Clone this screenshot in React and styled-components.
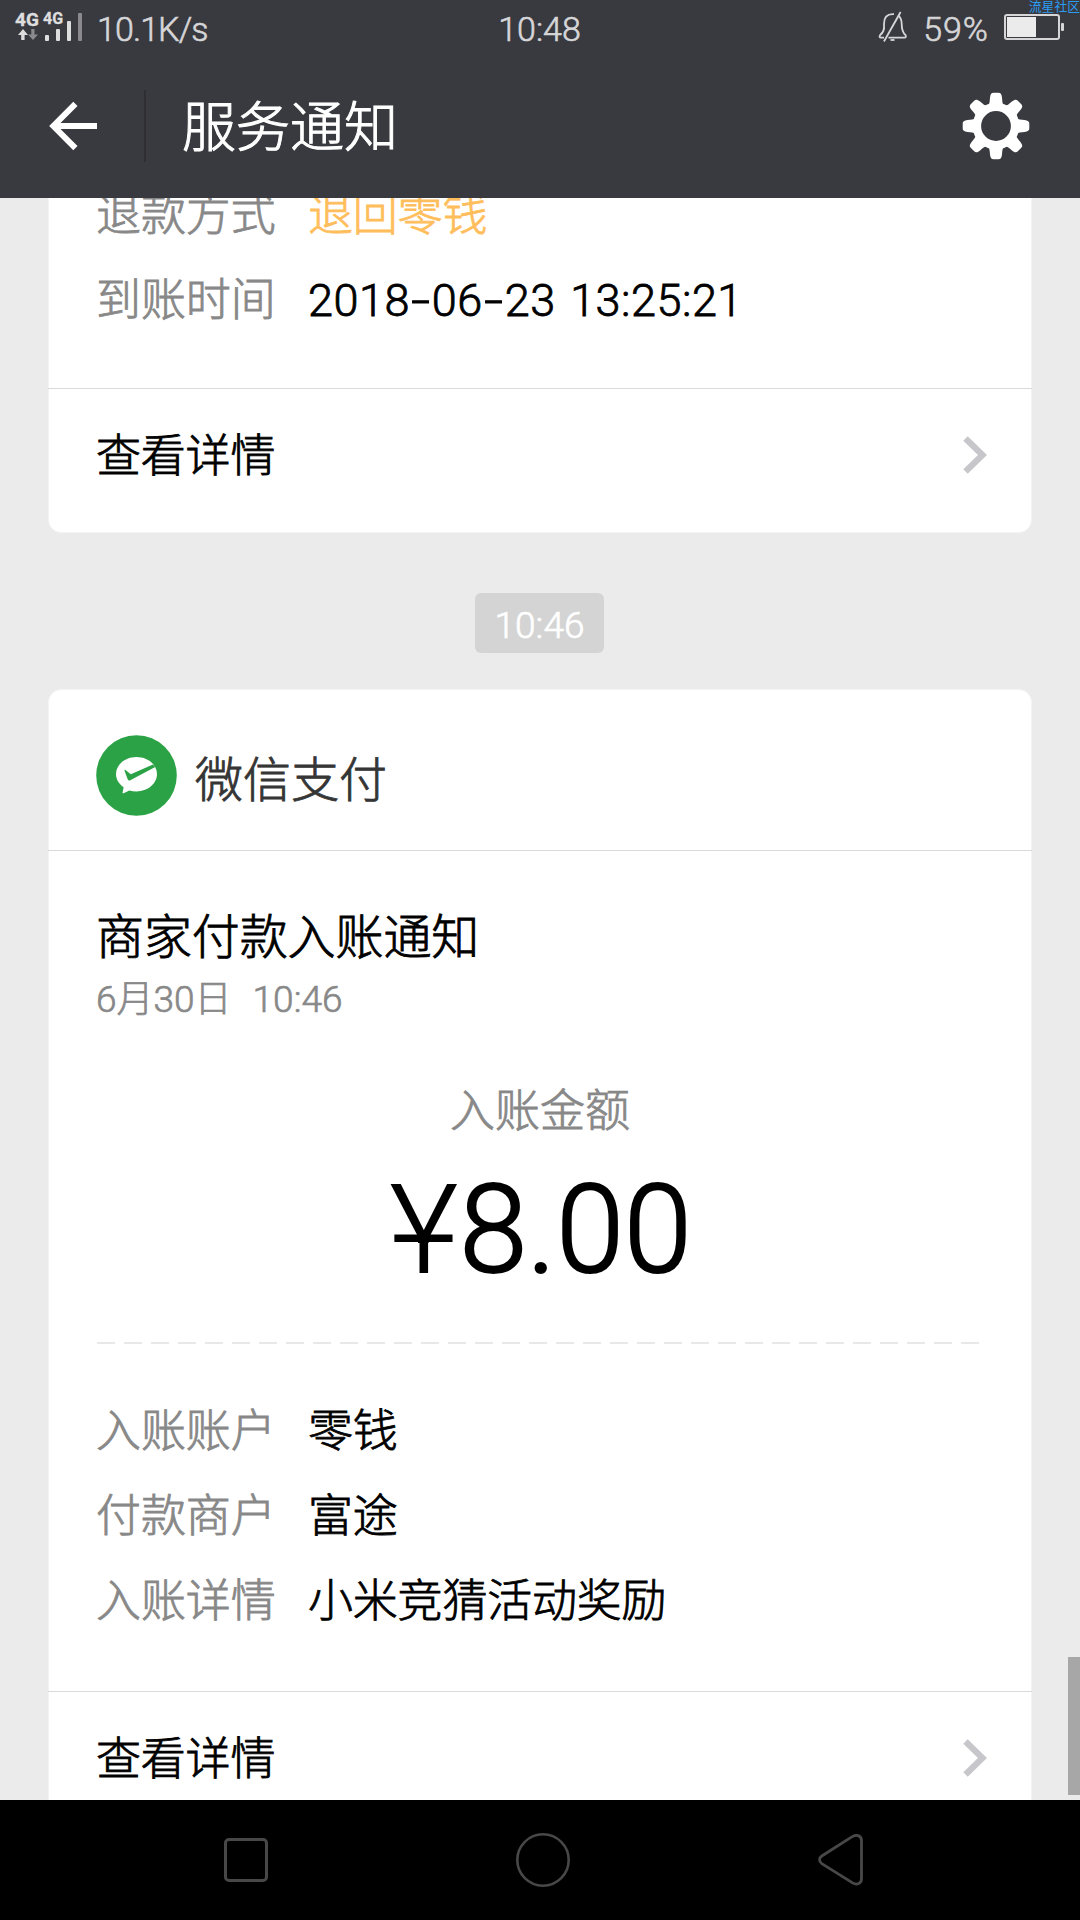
import React from "react"
import styled, { createGlobalStyle } from "styled-components";

const refundRows = [
    { label: '退款方式', value: '退回零钱', accent: true },
    { label: '到账时间', value: '2018-06-23 13:25:21', numeric: true },
];

const incomeRows = [
    { label: '入账账户', value: '零钱' },
    { label: '付款商户', value: '富途' },
    { label: '入账详情', value: '小米竞猜活动奖励' },
];

// hyphens are drawn wider than the default glyph
const withDashes = (text) =>
    text.split('-').map((part, i) => (
        <React.Fragment key={i}>
            {i > 0 && <Dash>-</Dash>}
            {part}
        </React.Fragment>
    ));

function Signal(){
    return (
        <SignalBox>
            <SimColumn>
                <NetLabel size={19}>4G</NetLabel>
                <svg width="20" height="12" viewBox="0 0 20 12">
                    <path d="M5 0 L10 6 H6.6 V11 H3.2 V6 H0Z" fill="#dededf" />
                    <path d="M15 11 L20 5.5 H16.5 V0 H13.3 V5.5 H10Z" fill="#8b8b8f" />
                </svg>
            </SimColumn>
            <Bars>
                <NetLabel size={16}>4G</NetLabel>
                <svg width="38" height="28" viewBox="0 0 38 28">
                    <rect x="0" y="22" width="4" height="6" rx="1" fill="#dededf" />
                    <rect x="11" y="16" width="4" height="12" rx="1" fill="#dededf" />
                    <rect x="22" y="8" width="4" height="20" rx="1" fill="#dededf" />
                    <rect x="33" y="0" width="4" height="28" rx="1" fill="#8b8b8f" />
                </svg>
            </Bars>
        </SignalBox>
    );
}

function BellOff(){
    return (
        <svg width="30" height="32" viewBox="0 0 30 32" fill="none" stroke="#d6d6d8" strokeWidth="1.8">
            <path d="M6 18 V13 C6 6 9 3.2 14.5 3.2 H16" />
            <path d="M20.5 4.6 C23 7 23.7 9 23.7 13 C23.7 19 24.5 21.5 27.5 24 C28.4 25.6 27.8 26.6 26.5 26.6 H10.5" />
            <path d="M6 17 C6 20 4 22.5 2.2 24 C1 25.6 1.6 26.6 3 26.6 H6" />
            <path d="M22.6 1 L6 30.5" />
            <path d="M12.5 29 H16.5" />
        </svg>
    );
}

function Battery(){
    return (
        <svg width="60" height="26" viewBox="0 0 60 26">
            <rect x="1" y="1" width="54" height="24" rx="2" fill="none" stroke="#d6d6d8" strokeWidth="2" />
            <rect x="3" y="3" width="29" height="20" fill="#ebebeb" />
            <rect x="57" y="9" width="3" height="8" rx="1" fill="#d6d6d8" />
        </svg>
    );
}

function Gear(){
    return (
        <svg width="68" height="68" viewBox="-34 -34 68 68">
            {[0, 45, 90, 135, 180, 225, 270, 315].map((a) => (
                <path
                    key={a}
                    transform={`rotate(${a})`}
                    d="M-8 -20 C-6.3 -22.5 -6.3 -25 -6 -28.5 C-5.6 -32 -4.5 -33.3 -2.5 -33.3 H2.5 C4.5 -33.3 5.6 -32 6 -28.5 C6.3 -25 6.3 -22.5 8 -20Z"
                    fill="#fff"
                />
            ))}
            <circle r="19.1" fill="none" stroke="#fff" strokeWidth="8.4" />
        </svg>
    );
}

function PayLogo(){
    return (
        <svg width="81" height="81" viewBox="0 0 81 81">
            <circle cx="40.5" cy="40.5" r="40.3" fill="#2ba245" />
            <path
                d="M40.5 22 C51.8 22 61 29.6 61 39 C61 48.6 51.8 56.4 40.5 56.4 C38 56.4 35.6 56 33.4 55.4 L27.6 58.2 C26.8 58.6 26.4 58.2 26.6 57.4 L27.6 52.2 C23 49 20 44.3 20 39 C20 29.6 29.2 22 40.5 22Z"
                fill="#fff"
            />
            <path d="M29.5 35 L34.8 39.2 L57 29.6 L59.2 32 L33.8 45.4 C33 45.8 32.2 45.4 31.8 44.6 L28.6 36 C28.4 35 28.9 34.6 29.5 35Z" fill="#2ba245" />
        </svg>
    );
}

function DetailRow({ label, value, accent, numeric }){
    return (
        <Row>
            <RowLabel>{label}</RowLabel>
            <RowValue $accent={accent} $numeric={numeric}>{withDashes(value)}</RowValue>
        </Row>
    );
}

function MoreLink(){
    return (
        <More>
            <span>查看详情</span>
            <svg width="24" height="38" viewBox="0 0 24 38">
                <path d="M2.5 2.5 L19.5 19 L2.5 35.5" fill="none" stroke="#c7c7cb" strokeWidth="6.4" />
            </svg>
        </More>
    );
}

export default function App(){
    return (
        <Screen>
            <GlobalStyle />
            <Header>
                <StatusBar>
                    <StatusLeft>
                        <Signal />
                        <StatusText $spacing="-0.9px">10.1K/s</StatusText>
                    </StatusLeft>
                    <StatusText>10:48</StatusText>
                    <StatusRight>
                        <BellOff />
                        <StatusText $spacing="1px">59%</StatusText>
                        <Battery />
                    </StatusRight>
                </StatusBar>
                <Watermark>流星社区</Watermark>
                <TitleBar>
                    <svg width="50" height="50" viewBox="0 0 50 50">
                        <path d="M48 25 H6 M26.4 2.8 L4.4 25 L26.4 47.2" fill="none" stroke="#fff" strokeWidth="6" />
                    </svg>
                    <TitleDivider />
                    <Title>服务通知</Title>
                    <Gear />
                </TitleBar>
            </Header>

            <Content>
                <Card $first>
                    <Rows>
                        {refundRows.map((row) => <DetailRow key={row.label} {...row} />)}
                    </Rows>
                    <MoreLink />
                </Card>

                <TimePill>10:46</TimePill>

                <Card>
                    <Sender>
                        <PayLogo />
                        <span>微信支付</span>
                    </Sender>
                    <Subject>商家付款入账通知</Subject>
                    <DateText>6月30日<Gap />10:46</DateText>
                    <AmountLabel>入账金额</AmountLabel>
                    <Amount><Yen><span>¥</span></Yen>8.00</Amount>
                    <DashedLine />
                    <Rows $spaced>
                        {incomeRows.map((row) => <DetailRow key={row.label} {...row} />)}
                    </Rows>
                    <MoreLink />
                </Card>
                <ScrollThumb />
            </Content>

            <NavBar>
                <svg width="44" height="44" viewBox="0 0 44 44">
                    <rect x="1.5" y="1.5" width="41" height="41" rx="3.5" fill="none" stroke="#484848" strokeWidth="3" />
                </svg>
                <svg width="54" height="54" viewBox="0 0 54 54">
                    <circle cx="27" cy="27" r="25.7" fill="none" stroke="#484848" strokeWidth="2.6" />
                </svg>
                <svg width="46" height="52" viewBox="0 0 46 52">
                    <path d="M3.8 22 L34.6 2.4 C39 0 43.5 2 43.5 6.5 V44.5 C43.5 49.5 39 51.5 34.6 48.9 L3.8 29.6 C0.8 27.5 0.8 24 3.8 22Z" fill="none" stroke="#484848" strokeWidth="2.8" />
                </svg>
            </NavBar>
        </Screen>
    );
}


const GlobalStyle = createGlobalStyle`
  body {
    margin: 0;
    background: #000;
  }

  /* light faces are a little too thin, the stroke puts them between light and regular */
  * {
    box-sizing: border-box;
    -webkit-text-stroke: 0.018em;
  }

  svg {
    display: block;
    flex-shrink: 0;
  }
`;

const Screen = styled.div`
  display: flex;
  flex-direction: column;
  width: 1080px;
  height: 1920px;
  overflow: hidden;
  font-family: Roboto, "Noto Sans CJK SC", sans-serif;
  font-weight: 300;
  white-space: nowrap;
`;

const Header = styled.header`
  position: relative;
  height: 198px;
  flex-shrink: 0;
  background: #393a3f;
`;

const StatusBar = styled.div`
  display: grid;
  grid-template-columns: 1fr auto 1fr;
  align-items: center;
  height: 54px;
  padding: 0 16px 0 15px;
`;

const StatusLeft = styled.div`
  display: flex;
  align-items: center;
  gap: 14px;
`;

const StatusRight = styled.div`
  display: flex;
  align-items: center;
  justify-content: flex-end;
  gap: 15px;
`;

const StatusText = styled.span`
  font-size: 34px;
  line-height: 40px;
  letter-spacing: ${(p) => p.$spacing || '0'};
  padding-top: 4px;
  color: #d6d6d8;
`;

const SignalBox = styled.div`
  display: flex;
  gap: 5px;
  height: 28px;
`;

const SimColumn = styled.div`
  display: flex;
  flex-direction: column;
  justify-content: space-between;
  width: 25px;

  svg {
    margin-left: 3px;
  }
`;

const Bars = styled.div`
  position: relative;

  span {
    position: absolute;
    top: -1px;
    left: -2px;
  }
`;

const NetLabel = styled.span`
  font-size: ${(p) => p.size}px;
  line-height: 14px;
  font-weight: 700;
  color: #dededf;
`;

const Watermark = styled.span`
  position: absolute;
  top: 0;
  right: 0;
  font-size: 12.8px;
  line-height: 13px;
  font-weight: 400;
  -webkit-text-stroke: 0;
  color: #2c9cf2;
`;

const TitleBar = styled.div`
  display: flex;
  align-items: center;
  height: 144px;
  padding: 0 50px 0 49px;
`;

const TitleDivider = styled.div`
  width: 2px;
  height: 72px;
  margin-left: 45px;
  background: #2e2e33;
`;

const Title = styled.h1`
  flex: 1;
  margin: 0;
  padding: 6px 0 0 36px;
  font-size: 54px;
  line-height: 60px;
  font-weight: 300;
  color: #fff;
`;

const Content = styled.main`
  position: relative;
  display: flex;
  flex-direction: column;
  flex: 1;
  min-height: 0;
  overflow: hidden;
  padding: 0 48px;
  background: #ebebeb;
`;

const Card = styled.section`
  flex-shrink: 0;
  margin-top: ${(p) => (p.$first ? '-40px' : '0')};
  border: 1px solid #f3f3f3;
  border-radius: 13px;
  background: #fff;
`;

const Rows = styled.div`
  padding: ${(p) => (p.$spaced ? '45px 47px 47px' : '14px 47px 45px')};
`;

const Row = styled.div`
  display: flex;
  align-items: center;
  height: 85px;
  font-size: 45px;
  line-height: 85px;
`;

const RowLabel = styled.span`
  width: 212px;
  letter-spacing: -0.1px;
  color: #888;
`;

const RowValue = styled.span`
  letter-spacing: ${(p) => (p.$numeric ? '0.5px' : '-0.2px')};
  word-spacing: 3px;
  color: ${(p) => (p.$accent ? '#ffbe5b' : '#000')};
`;

const Dash = styled.span`
  display: inline-block;
  width: 22px;
  text-align: center;
  transform: scaleX(1.5);
`;

const More = styled.div`
  display: flex;
  align-items: center;
  justify-content: space-between;
  height: 144px;
  margin: 0 -1px;
  padding: 0 45px 12px 48px;
  border-top: 1px solid #d9d9d9;
  font-size: 45px;
  color: #000;

  span {
    margin-top: -4px;
    letter-spacing: -0.2px;
  }
`;

const TimePill = styled.div`
  align-self: center;
  flex-shrink: 0;
  width: 129px;
  height: 60px;
  margin: 60px 1px 36px 0;
  border-radius: 6px;
  background: #d4d4d4;
  font-size: 37px;
  line-height: 66px;
  text-align: center;
  color: #fff;
`;

const Sender = styled.div`
  display: flex;
  align-items: center;
  gap: 18px;
  height: 161px;
  margin: 0 -1px;
  padding: 10px 48px 0;
  border-bottom: 1px solid #d9d9d9;
  font-size: 48px;
  color: #353535;

  span {
    padding-top: 1px;
  }
`;

const Subject = styled.h2`
  margin: 57px 47px 0;
  font-size: 48px;
  line-height: 60px;
  font-weight: 300;
  letter-spacing: -0.1px;
  color: #000;
`;

const DateText = styled.div`
  margin: 8px 47px 0;
  font-size: 37px;
  line-height: 48px;
  color: #888;
`;

const Gap = styled.span`
  display: inline-block;
  width: 21px;
`;

const AmountLabel = styled.div`
  margin-top: 58px;
  font-size: 45px;
  line-height: 60px;
  text-align: center;
  color: #888;
`;

const Amount = styled.div`
  margin-top: 19px;
  font-size: 122px;
  line-height: 140px;
  text-align: center;
  color: #000;
`;

// yen sign with a single bar: the lower bar of the glyph laid over a plain Y
const Yen = styled.span`
  position: relative;
  display: inline-block;
  width: 71px;
  height: 140px;
  vertical-align: top;

  &::before {
    content: "Y";
    position: absolute;
    left: 50%;
    top: 0;
    transform: translateX(-50%) scaleX(0.9);
  }

  span {
    display: inline-block;
    height: 140px;
    clip-path: inset(83px -10px 46px -10px);
    transform: translateY(-12px) scaleX(1.12);
  }
`;

const DashedLine = styled.div`
  height: 2px;
  margin: 41px 52px 0 48px;
  background: repeating-linear-gradient(90deg, #e8e8e8 0 18px, transparent 18px 27px);
`;

const ScrollThumb = styled.div`
  position: absolute;
  right: 0;
  bottom: 5px;
  width: 12px;
  height: 138px;
  background: #a7a7a7;
`;

const NavBar = styled.nav`
  display: flex;
  align-items: center;
  gap: 248px;
  height: 120px;
  flex-shrink: 0;
  padding-left: 224px;
  background: #000;
`;
